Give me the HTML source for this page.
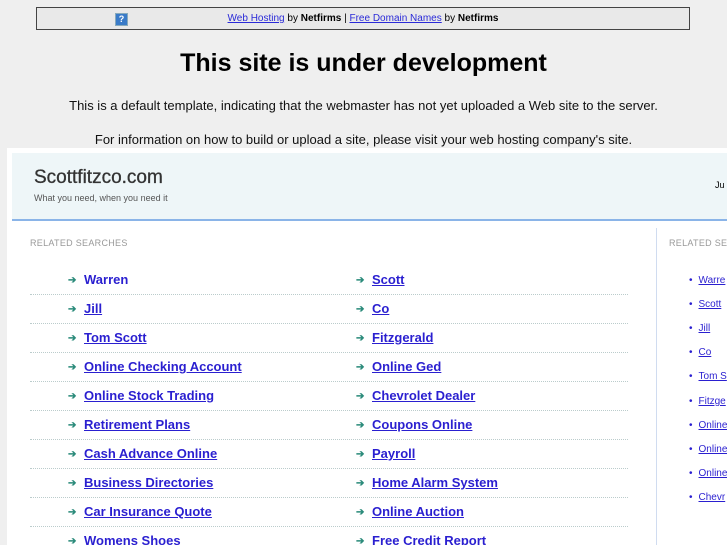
<!DOCTYPE html>
<html><head><style>
html,body{margin:0;padding:0;background:#efefef;width:727px;height:545px;overflow:hidden}
#w{position:relative;width:727px;height:545px;overflow:hidden;font-family:"Liberation Sans",sans-serif}
.bar{position:absolute;left:36px;top:7px;width:652px;height:21px;border:1px solid #444;background:#e9e9e9;font-size:10px;text-align:center;line-height:21px;color:#000}
.bar a{color:#2a2ad8;text-decoration:underline}
.q{position:absolute;left:78px;top:5px;width:11px;height:11px;background:#3a7bc8;color:#fff;font-size:9px;line-height:11px;font-weight:bold;border:1px solid #8ab}
h1{position:absolute;top:47px;left:0;width:727px;text-align:center;margin:0;font-size:25px;line-height:32px}
.p{position:absolute;left:0;width:727px;text-align:center;font-size:13px;color:#111}
.frame{position:absolute;left:7px;top:148px;width:720px;height:397px;background:#fff}
.hdr{position:absolute;left:12px;top:153px;width:715px;height:66px;background:#eef6f8;border-bottom:2px solid #8ab4e8}
.t{position:absolute;left:34px;top:167px;font-size:19px;color:#333;-webkit-text-stroke:0.3px #333}
.s{position:absolute;left:34px;top:193px;font-size:9px;color:#555}
.lab{position:absolute;top:238px;font-size:9px;color:#999;letter-spacing:.3px;white-space:nowrap}
.row{position:absolute;left:30px;width:598px;height:28px;border-bottom:1px dotted #bcc}
.it{position:absolute;font-size:13px;font-weight:bold;color:#2a1fd0;text-decoration:underline;top:6px;white-space:nowrap}
.ar{position:absolute;color:#2a8a7a;font-size:10px;top:9px;font-weight:bold}
.vl{position:absolute;left:656px;top:228px;width:1px;height:317px;background:#d0dcf0}
.r{position:absolute;left:689px;font-size:10px;color:#2a1fd0;white-space:nowrap}
.r a{color:#2a1fd0;text-decoration:underline;margin-left:6px}
</style></head><body><div id="w">
<div class="bar"><span class="q">?</span><a>Web Hosting</a> by <b>Netfirms</b> | <a>Free Domain Names</a> by <b>Netfirms</b></div>
<h1>This site is under development</h1>
<div class="p" style="top:98px">This is a default template, indicating that the webmaster has not yet uploaded a Web site to the server.</div>
<div class="p" style="top:132px">For information on how to build or upload a site, please visit your web hosting company's site.</div>
<div class="frame"></div>
<div class="hdr"></div>
<div class="t">Scottfitzco.com</div>
<div class="s">What you need, when you need it</div>
<div style="position:absolute;left:715px;top:180px;font-size:9px">Ju</div>
<div class="lab" style="left:30px">RELATED SEARCHES</div>
<div class="lab" style="left:669px">RELATED SE</div>
<div class="vl"></div>
<div class="row" style="top:266px"><span class="ar" style="left:38px">➔</span><span class="it" style="left:54px;text-decoration:none">Warren</span><span class="ar" style="left:326px">➔</span><span class="it" style="left:342px">Scott</span></div>
<div class="row" style="top:295px"><span class="ar" style="left:38px">➔</span><span class="it" style="left:54px">Jill</span><span class="ar" style="left:326px">➔</span><span class="it" style="left:342px">Co</span></div>
<div class="row" style="top:324px"><span class="ar" style="left:38px">➔</span><span class="it" style="left:54px">Tom Scott</span><span class="ar" style="left:326px">➔</span><span class="it" style="left:342px">Fitzgerald</span></div>
<div class="row" style="top:353px"><span class="ar" style="left:38px">➔</span><span class="it" style="left:54px">Online Checking Account</span><span class="ar" style="left:326px">➔</span><span class="it" style="left:342px">Online Ged</span></div>
<div class="row" style="top:382px"><span class="ar" style="left:38px">➔</span><span class="it" style="left:54px">Online Stock Trading</span><span class="ar" style="left:326px">➔</span><span class="it" style="left:342px">Chevrolet Dealer</span></div>
<div class="row" style="top:411px"><span class="ar" style="left:38px">➔</span><span class="it" style="left:54px">Retirement Plans</span><span class="ar" style="left:326px">➔</span><span class="it" style="left:342px">Coupons Online</span></div>
<div class="row" style="top:440px"><span class="ar" style="left:38px">➔</span><span class="it" style="left:54px">Cash Advance Online</span><span class="ar" style="left:326px">➔</span><span class="it" style="left:342px">Payroll</span></div>
<div class="row" style="top:469px"><span class="ar" style="left:38px">➔</span><span class="it" style="left:54px">Business Directories</span><span class="ar" style="left:326px">➔</span><span class="it" style="left:342px">Home Alarm System</span></div>
<div class="row" style="top:498px"><span class="ar" style="left:38px">➔</span><span class="it" style="left:54px">Car Insurance Quote</span><span class="ar" style="left:326px">➔</span><span class="it" style="left:342px">Online Auction</span></div>
<div class="row" style="top:527px;border-bottom:0"><span class="ar" style="left:38px">➔</span><span class="it" style="left:54px">Womens Shoes</span><span class="ar" style="left:326px">➔</span><span class="it" style="left:342px">Free Credit Report</span></div>
<div class="r" style="top:275px">•<a>Warre</a></div>
<div class="r" style="top:299px">•<a>Scott</a></div>
<div class="r" style="top:323px">•<a>Jill</a></div>
<div class="r" style="top:347px">•<a>Co</a></div>
<div class="r" style="top:371px">•<a>Tom S</a></div>
<div class="r" style="top:396px">•<a>Fitzge</a></div>
<div class="r" style="top:420px">•<a>Online</a></div>
<div class="r" style="top:444px">•<a>Online</a></div>
<div class="r" style="top:468px">•<a>Online</a></div>
<div class="r" style="top:492px">•<a>Chevr</a></div>
</div></body></html>
